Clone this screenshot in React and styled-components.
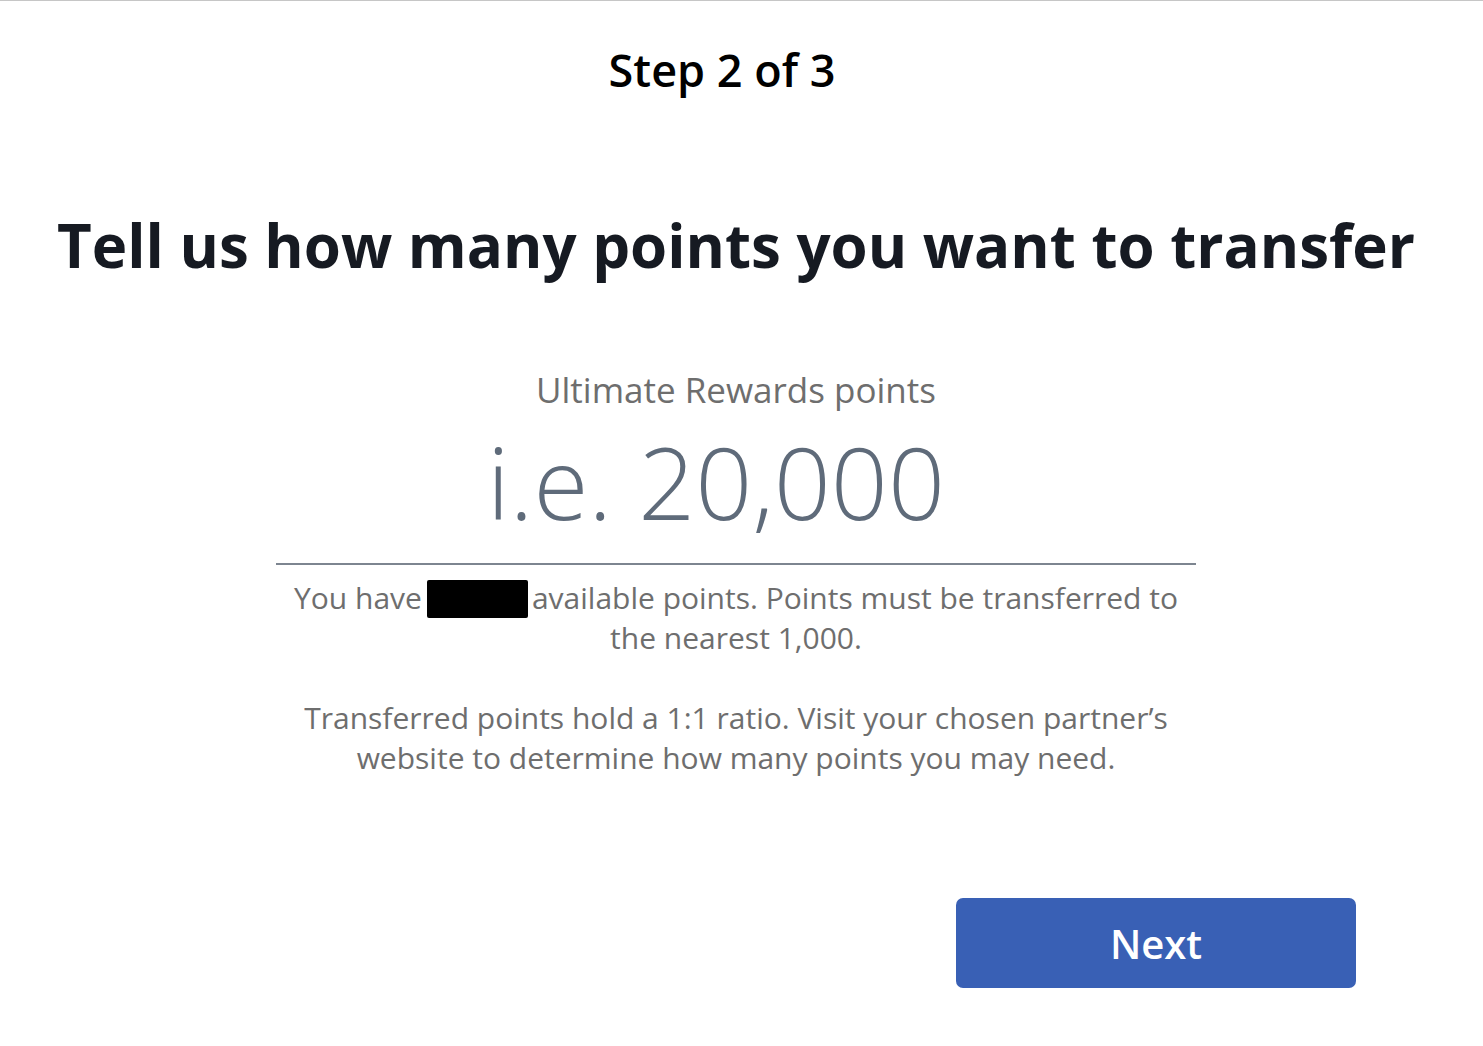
import styled, { createGlobalStyle } from "styled-components";

const Global = createGlobalStyle`
  body {
    margin: 0;
    background: #fff;
    font-family: "Open Sans", "Liberation Sans", sans-serif;
  }
`;

function App() {
  return (
    <Page>
      <Global />
      <Step>Step 2 of 3</Step>
      <Heading>Tell us how many points you want to transfer</Heading>
      <Field>
        <Label>Ultimate Rewards points</Label>
        <Amount placeholder="i.e. 20,000" />
        <Note>
          You have<Redacted />available points. Points must be transferred to
          the nearest 1,000.
        </Note>
        <Note spaced>
          Transferred points hold a 1:1 ratio. Visit your chosen partner’s
          website to determine how many points you may need.
        </Note>
      </Field>
      <Footer>
        <NextButton>Next</NextButton>
      </Footer>
    </Page>
  );
}

const Page = styled.div`
  border-top: 1px solid #c6c6c6;
  min-height: 1045px;
  padding-right: 11px;
  display: flex;
  flex-direction: column;
  align-items: center;
`;

const Step = styled.h2`
  margin: 41px 0 0 -28px;
  font-size: 45px;
  line-height: 56px;
  font-weight: 600;
  color: #000;
`;

const Heading = styled.h1`
  margin: 107px 0 0;
  font-size: 60px;
  line-height: 80px;
  font-weight: 700;
  color: #161a22;
`;

const Field = styled.div`
  width: 920px;
  margin: 81px 0 0;
  display: flex;
  flex-direction: column;
  align-items: center;
`;

const Label = styled.div`
  font-size: 35px;
  line-height: 48px;
  color: #6e6e6e;
`;

const Amount = styled.input`
  width: 100%;
  box-sizing: border-box;
  margin-top: -5px;
  border: none;
  border-bottom: 2px solid #7d8590;
  outline: none;
  background: transparent;
  text-align: center;
  font-family: inherit;
  font-size: 100px;
  font-weight: 300;
  height: 156px;
  padding: 0 40px 10px 0;
  color: #5f6b7a;
  &::placeholder {
    color: #5f6b7a;
    opacity: 1;
  }
`;

const Note = styled.p`
  margin: ${(p) => (p.spaced ? "40px" : "13px")} 0 0;
  font-size: 30px;
  line-height: 40px;
  color: #6e6e6e;
  text-align: center;
`;

const Redacted = styled.span`
  display: inline-block;
  width: 101px;
  height: 38px;
  margin: 0 4px 0 5px;
  background: #000;
  border-radius: 2px;
  vertical-align: -9px;
`;

const Footer = styled.div`
  align-self: stretch;
  display: flex;
  justify-content: flex-end;
  padding-right: 116px;
  margin-top: 120px;
`;

const NextButton = styled.button`
  width: 400px;
  height: 90px;
  border: none;
  border-radius: 7px;
  background: #3960b5;
  color: #fff;
  font-family: inherit;
  font-size: 40px;
  font-weight: 600;
  cursor: pointer;
`;

export default App;
